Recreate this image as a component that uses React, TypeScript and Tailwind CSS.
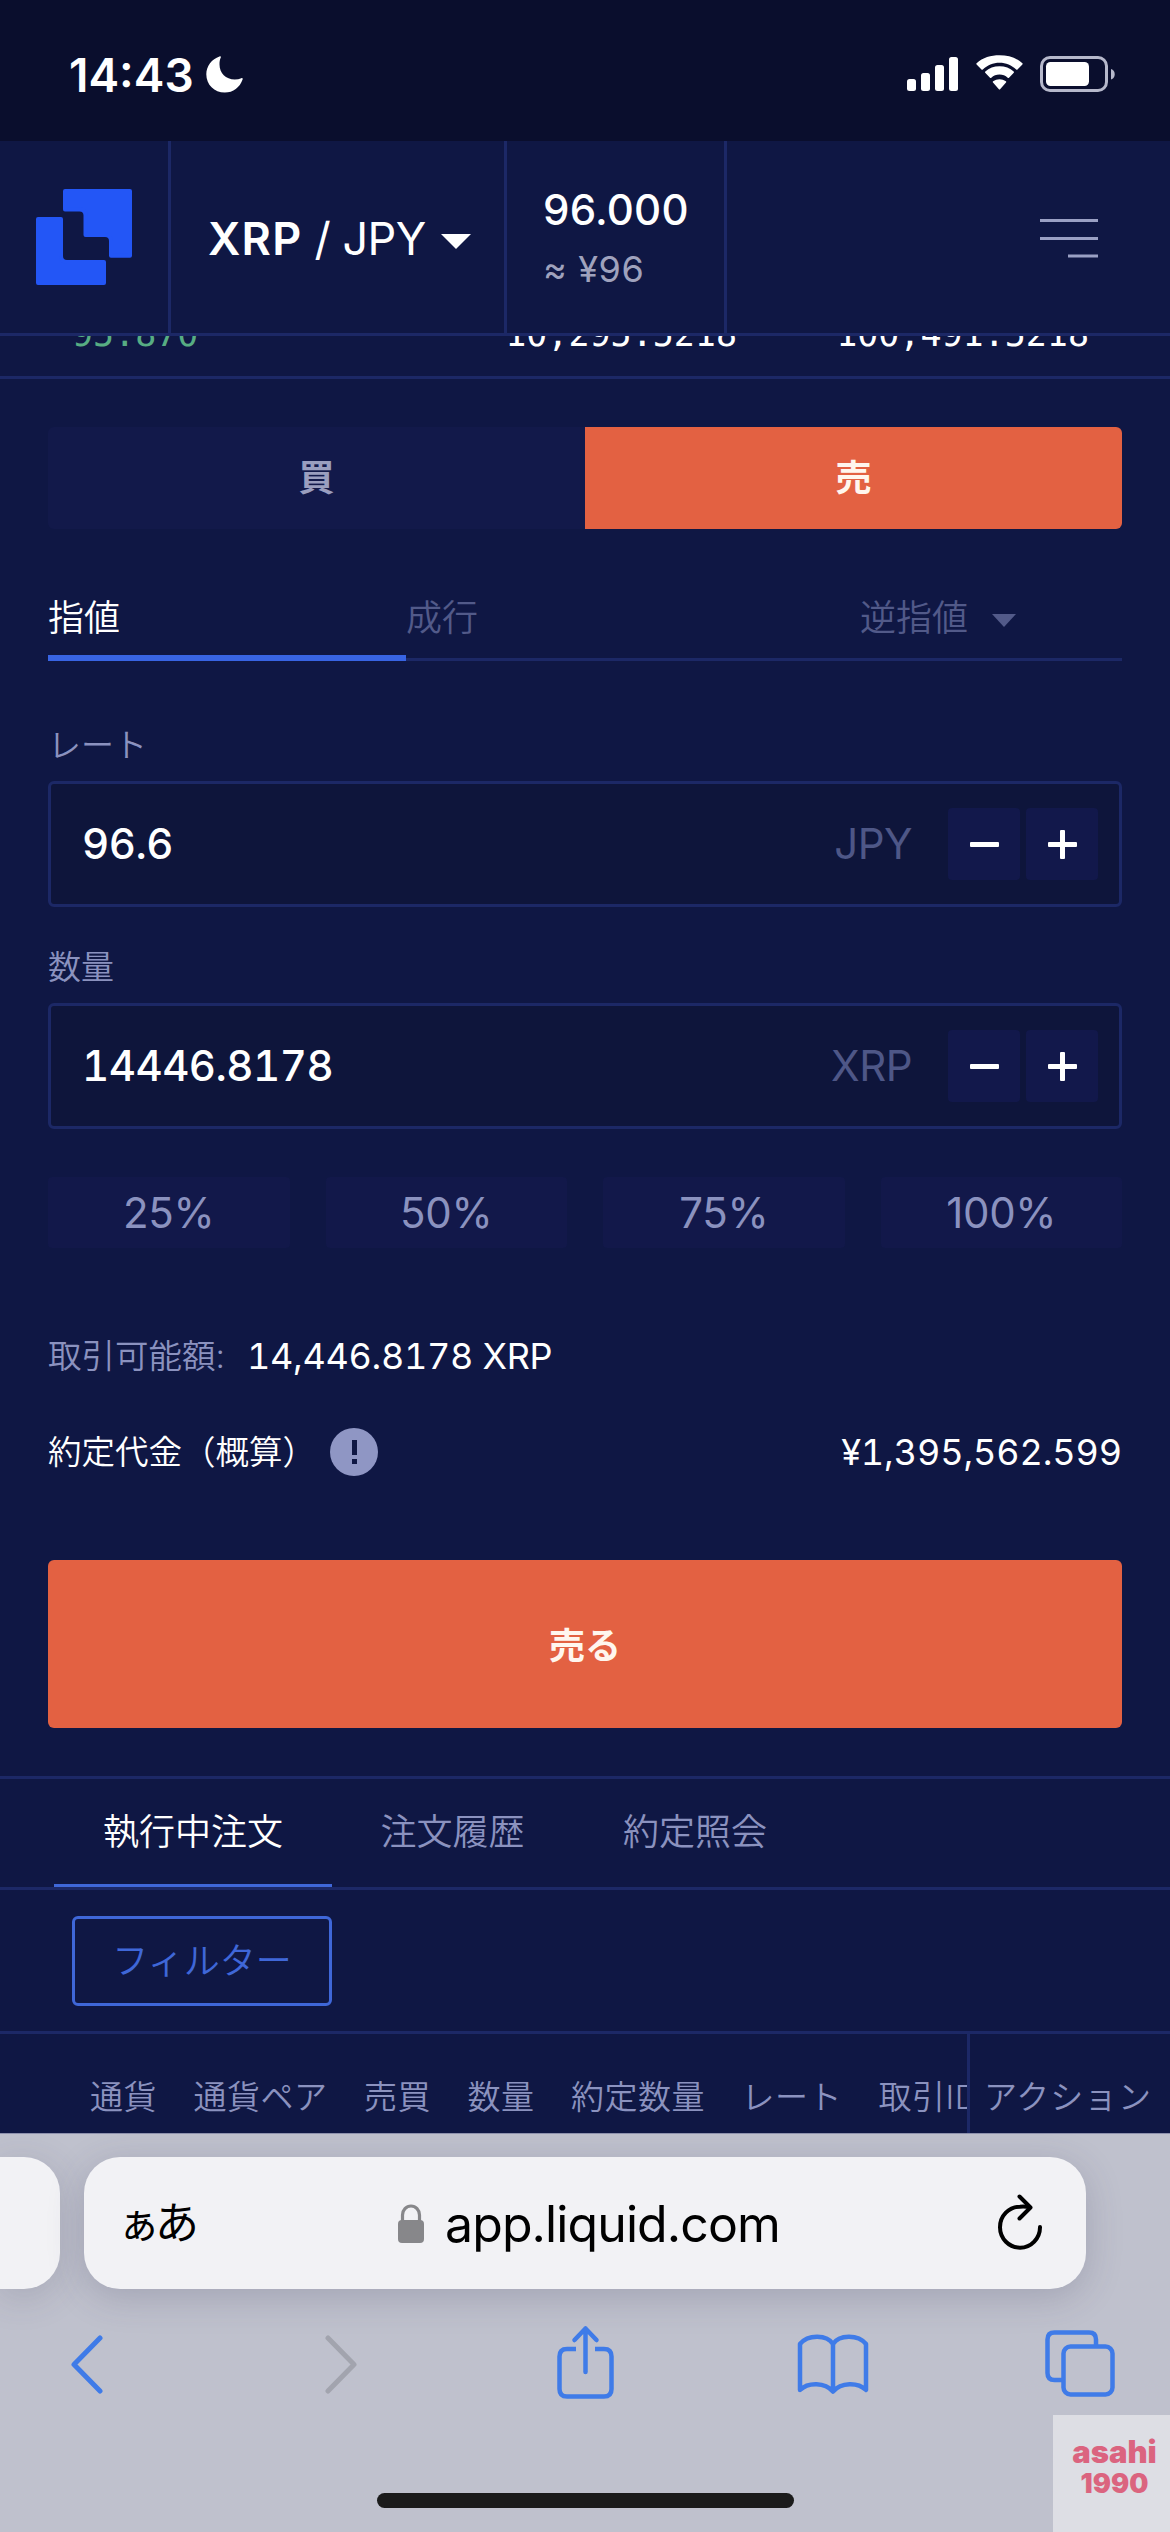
import React from 'react';

function Caret({ className }: { className: string }) {
  return (
    <svg viewBox="0 0 30 15" preserveAspectRatio="none" className={className} fill="currentColor">
      <path d="M0 0h30L15 15z" />
    </svg>
  );
}

function StatusBar() {
  return (
    <div className="flex h-[141px] shrink-0 items-start justify-between bg-[#0a0e2d] pr-[54px] pl-[69px] text-white">
      <div className="flex pt-[47px]">
        <span className="w-[137px] text-[46px] leading-[56px] font-semibold tracking-[0px]">14:43</span>
        <svg className="mt-[9px] h-[37px] w-[37px]" viewBox="0 0 37 37" fill="currentColor">
          <path d="M13.500.4c.9-.4 1.700.3 1.300 1.200-1 2.200-1.300 4.200-1.300 6.600 0 9 6.300 15.200 15.300 15.200 2.400 0 4.600-.4 6.500-1.200.9-.4 1.700.3 1.300 1.200C33.800 31.300 27.200 36.500 18.800 36.500 8.300 36.500.3 28.700.3 18.200.3 10 5.800 3 13.500.4z" />
        </svg>
      </div>
      <div className="flex items-start pt-[55px]">
        <svg className="mt-[2px] h-[34px] w-[51px]" viewBox="0 0 51 34" fill="currentColor">
          <rect x="0" y="22" width="9" height="12" rx="2.500" />
          <rect x="14" y="16" width="9" height="18" rx="2.500" />
          <rect x="28" y="8" width="9" height="26" rx="2.500" />
          <rect x="42" y="0" width="9" height="34" rx="2.500" />
        </svg>
        <svg className="ml-[17px] h-[37px] w-[49px]" viewBox="0 0 49 37" fill="currentColor">
          <path d="M24.500 7.700c6.400 0 12.300 2.500 16.700 6.700.4.400.9.400 1.300 0l4.900-4.900c.4-.4.4-1 0-1.300C41.200 2.600 33.200.3 24.500.3S7.800 2.600 1.600 8.200c-.4.300-.4.900 0 1.300l4.900 4.900c.4.400.9.400 1.300 0 4.400-4.200 10.300-6.700 16.700-6.700z" />
          <path d="M24.500 19.600c3.200 0 6 1.100 8.200 3.100.4.400.9.300 1.300 0l4.800-4.900c.3-.4.3-.9-.1-1.300-3.700-3.400-8.700-5.200-14.200-5.200s-10.500 1.800-14.200 5.200c-.4.400-.4.900-.1 1.300l4.800 4.900c.4.300.9.400 1.300 0 2.200-2 5-3.100 8.200-3.100z" />
          <path d="M31 27.600c.4-.4.300-1-.1-1.300-3.800-2.900-9-2.900-12.800 0-.4.300-.5.900-.1 1.300l5.900 6.600c.3.400.9.400 1.200 0z" />
        </svg>
        <svg className="ml-4 h-[37px] w-[76px]" viewBox="0 0 76 37">
          <rect x="1.500" y="2.500" width="65" height="33" rx="8.500" fill="none" stroke="#b6b8cb" strokeWidth="3" />
          <rect x="6" y="7" width="43" height="24" rx="4.500" fill="#fff" />
          <path d="M71 14c5 1.500 5 9 0 10.500z" fill="#b6b8cb" />
        </svg>
      </div>
    </div>
  );
}

function Header() {
  return (
    <header className="flex h-[195px] shrink-0 border-b-[3px] border-[#1c2866] text-white">
      <div className="flex w-[171px] items-center border-r-[3px] border-[#1c2866] pl-9">
        <svg className="h-24 w-24" viewBox="0 0 96 96" fill="#2356f6" stroke="#2356f6" strokeWidth="4" strokeLinejoin="round">
          <path d="M29 2H94V66.700H75V52Q75 46 69 46H49.500V26.500Q49.500 20.500 43.500 20.500H29Z" />
          <path d="M2 30H25V67Q25 73 31 73H68V94H2Z" />
        </svg>
      </div>
      <div className="flex w-[336px] items-center border-r-[3px] border-[#1c2866] pl-[37px]">
        <span className="mt-[3px] w-[233px] text-[45px] leading-[60px] font-normal tracking-[-0.5px] whitespace-nowrap">
          <b className="font-semibold tracking-[1.200px]">XRP</b> / JPY
        </span>
        <Caret className="mt-2 h-[15px] w-[30px]" />
      </div>
      <div className="flex w-[220px] flex-col border-r-[3px] border-[#1c2866] pt-[42px] pl-9">
        <span className="text-[42px] leading-[54px] font-[450] tracking-[0.2px]">96.000</span>
        <span className="text-[36px] leading-[64px] tracking-[0.6px] text-[#9fa2bd]">≈ ¥96</span>
      </div>
      <div className="flex flex-1 items-start justify-end pt-[78px] pr-[72px]">
        <svg className="h-[39px] w-[58px]" viewBox="0 0 58 39" fill="#9aa0c4">
          <rect y="0" width="58" height="3" />
          <rect y="18" width="58" height="3" />
          <rect x="28" y="35.500" width="30" height="3" />
        </svg>
      </div>
    </header>
  );
}

function OrderBookTail() {
  return (
    <div className="flex h-[43px] shrink-0 items-start overflow-hidden border-b-[3px] border-[#1c2866] font-['DejaVu_Sans_Mono',monospace] text-[35px] leading-[40px] text-white">
      <div className="-mt-[22px] flex w-full">
        <span className="w-[434px] pl-[72px] text-[#57ad83]">95.870</span>
        <span className="w-[303px] text-right">10,295.5218</span>
        <span className="w-[352px] text-right">100,491.5218</span>
      </div>
    </div>
  );
}

function Field({ label, value, unit }: { label: string; value: string; unit: string }) {
  return (
    <div className="flex flex-col">
      <span className="h-[60px] text-[33px] leading-[48px] font-[350] text-[#8b92bf]">{label}</span>
      <div className="flex h-[126px] items-center rounded-md border-[3px] border-[#1c2866] bg-[#0e153b] pr-[21px] pl-[31px]">
        <span className="flex-1 text-[42px] leading-[60px] font-[450] tracking-[-0.5px] tabular-nums text-white">
          {value}
        </span>
        <span className="mr-9 text-[42px] leading-[60px] tracking-[-0.5px] text-[#4e5787]">{unit}</span>
        <div className="flex gap-1.5">
          <Step />
          <Step plus />
        </div>
      </div>
    </div>
  );
}

function Step({ plus }: { plus?: boolean }) {
  return (
    <button className="flex h-[72px] w-[72px] items-center justify-center rounded bg-[#12184b]">
      <svg className="h-[29px] w-[29px]" viewBox="0 0 29 29" fill="#fff">
        <rect x="0" y="12" width="29" height="5" rx="1" />
        {plus && <rect x="12" y="0" width="5" height="29" rx="1" />}
      </svg>
    </button>
  );
}

function OrderForm() {
  return (
    <section className="flex flex-col px-12 pt-12">
      <div className="grid h-[102px] grid-cols-2 text-[36px] font-bold">
        <button className="rounded-l-md bg-[#12194a] text-[#9a9ebf]">買</button>
        <button className="rounded-r-md bg-[#e36142] text-[#fff6ee]">売</button>
      </div>

      <div className="mt-[50px] grid h-[82px] grid-cols-3 text-[36px] leading-[79px] font-[350] text-[#525a89]">
        <span className="h-[82px] border-b-[6px] border-[#3864e3] text-white">指値</span>
        <span className="h-[82px] border-b-[3px] border-[#1c2866]">成行</span>
        <span className="flex h-[82px] items-center justify-center border-b-[3px] border-[#1c2866] pr-[10px]">
          逆指値
          <Caret className="mt-[3px] ml-6 h-[13px] w-6" />
        </span>
      </div>

      <div className="mt-[60px] flex flex-col gap-9">
        <Field label="レート" value="96.6" unit="JPY" />
        <Field label="数量" value="14446.8178" unit="XRP" />
      </div>

      <div className="mt-12 grid h-[71px] grid-cols-4 gap-9 text-[42px] text-[#8b92bf]">
        {['25%', '50%', '75%', '100%'].map((p) => (
          <button key={p} className="rounded bg-[#12184a] tracking-[-0.3px]">
            {p}
          </button>
        ))}
      </div>

      <div className="mt-[78px] flex h-[60px] items-center text-[36px]">
        <span className="w-[199px] text-[33.500px] font-[350] text-[#8b92bf]">取引可能額:</span>
        <span className="tracking-[-0.3px] tabular-nums text-white">14,446.8178 XRP</span>
      </div>
      <div className="mt-9 flex h-[60px] items-center text-white">
        <span className="w-[282px] text-[33.500px] font-[350] whitespace-nowrap">約定代金（概算）</span>
        <span className="flex h-12 w-12 items-center justify-center rounded-full bg-[#8f96c4]">
          <svg className="h-6 w-[5px]" viewBox="0 0 5 24" fill="#0f1744">
            <rect width="5" height="15" />
            <rect y="19" width="5" height="5" />
          </svg>
        </span>
        <span className="ml-auto text-[36px] tracking-[-0.1px] tabular-nums">¥1,395,562.599</span>
      </div>

      <button className="mt-[78px] h-[168px] rounded-md bg-[#e36142] pt-[3px] text-[36px] font-bold text-[#fff6ee]">売る</button>
    </section>
  );
}

function Orders() {
  const columns = ['通貨', '通貨ペア', '売買', '数量', '約定数量', 'レート', '取引ID'];
  return (
    <section className="mt-12 flex min-h-0 flex-1 flex-col border-t-[3px] border-[#1c2866] font-[350]">
      <nav className="flex h-[111px] shrink-0 border-b-[3px] border-[#1c2866] pl-[54px] text-[36px] leading-[107px] text-[#8b92bf]">
        <span className="h-[108px] w-[278px] border-b-[3px] border-[#3f67d8] text-center text-white">執行中注文</span>
        <span className="w-[241px] text-center">注文履歴</span>
        <span className="w-[244px] text-center">約定照会</span>
      </nav>
      <div className="flex h-[144px] shrink-0 items-start border-b-[3px] border-[#1c2866] pt-[26px] pl-[72px]">
        <button className="h-[90px] w-[260px] rounded-md border-[3px] border-[#3f67d8] text-[36px] font-[350] text-[#3f67d8]">
          フィルター
        </button>
      </div>
      <div className="flex min-h-0 flex-1 text-[33px] leading-[127px] tracking-[0.5px] whitespace-nowrap text-[#8b92bf]">
        <div className="flex w-[967px] shrink-0 gap-[36.500px] overflow-hidden pl-[90px]">
          {columns.map((c) => (
            <span key={c} className="shrink-0">
              {c}
            </span>
          ))}
        </div>
        <div className="flex-1 overflow-hidden border-l-[3px] border-[#1c2866] pl-[14px] tracking-[0.9px]">アクション</div>
      </div>
    </section>
  );
}

function BrowserChrome() {
  return (
    <footer className="relative flex h-[399px] shrink-0 flex-col overflow-hidden border-t border-[#8d91ad] bg-[#bfc1cd] pt-[23px]">
      <div className="flex h-[132px] gap-6">
        <div className="w-[60px] rounded-r-[36px] bg-[#f2f2f5] shadow-[0_8px_36px_rgba(60,60,90,0.18)]" />
        <div className="flex w-[1002px] items-center rounded-[36px] bg-[#f2f2f5] pl-[34px] text-black shadow-[0_8px_36px_rgba(60,60,90,0.22)]">
          <span className="flex w-[280px] items-baseline text-[42px] leading-[60px] font-normal">
            <span className="-mr-[5px]">ぁ</span>
            <span className="text-[44px]">あ</span>
          </span>
          <svg className="h-[39px] w-[26px]" viewBox="0 0 26 39">
            <rect x="0" y="16" width="26" height="23" rx="4" fill="#87878a" />
            <path d="M4.500 18v-7a8.500 9 0 0 1 17 0v7" fill="none" stroke="#87878a" strokeWidth="3.200" />
          </svg>
          <span className="mt-[2px] ml-[21px] text-[50px] leading-[60px] tracking-[-0.9px]">app.liquid.com</span>
          <svg className="mr-[43px] -mt-[3px] ml-auto h-[56px] w-[46px]" viewBox="0 0 46 56" fill="none" stroke="#000" strokeWidth="4" strokeLinecap="round" strokeLinejoin="round">
            <path d="M43 33A20 20.500 0 1 1 23 12.700C27 12.300 30 12.600 33 13.500" />
            <path d="M22.500 2.500L33.500 13.500L22.500 24.500" />
          </svg>
        </div>
      </div>
      <div className="mt-9 flex h-[80px] items-start text-[#3f7be8]">
        <svg className="mt-[9px] ml-[70px] h-[60px] w-[34px]" viewBox="0 0 34 60" fill="none" stroke="currentColor" strokeWidth="5" strokeLinecap="round" strokeLinejoin="round">
          <path d="M30 4L4 30.500L30 57" />
        </svg>
        <svg className="mt-[9px] ml-[220px] h-[60px] w-[34px]" viewBox="0 0 34 60" fill="none" stroke="#a2a4ae" strokeWidth="5" strokeLinecap="round" strokeLinejoin="round">
          <path d="M4 4L30 30.500L4 57" />
        </svg>
        <svg className="-mt-[1px] ml-[198px] h-[75px] w-[60px]" viewBox="0 0 60 75" fill="none" stroke="currentColor" strokeWidth="4.500" strokeLinecap="round" strokeLinejoin="round">
          <path strokeLinecap="butt" d="M20 25H11Q3.500 25 3.500 32.500V65Q3.500 72.500 11 72.500H48Q55.500 72.500 55.500 65V32.500Q55.500 25 48 25H39" />
          <path d="M29.500 48V4.500M18.500 16L29.500 4.500L40.500 16" />
        </svg>
        <svg className="mt-[8px] ml-[180px] h-[62px] w-[74px]" viewBox="0 0 74 62" fill="none" stroke="currentColor" strokeWidth="4.500" strokeLinecap="round" strokeLinejoin="round">
          <path d="M37 58V11C31 1.500 12 1 4 11V57C12 49 29 49 37 58.500C45 49 62 49 70 57V11C62 1 43 1.500 37 11" />
        </svg>
        <svg className="mt-[4px] ml-[175px] h-[68px] w-[70px]" viewBox="0 0 70 68" fill="none" stroke="currentColor" strokeWidth="4.500">
          <rect x="18.500" y="17.500" width="49" height="48" rx="7" />
          <path d="M51 17V10.500Q51 3.500 44 3.500H9.500Q2.500 3.500 2.500 10.500V44Q2.500 51 9.500 51H18" />
        </svg>
      </div>
      <div className="mx-auto mt-[88px] h-[15px] w-[417px] rounded-full bg-[#1b1b1b]" />
      <div className="absolute right-0 bottom-0 flex h-[117px] w-[117px] flex-col items-center bg-[#dddee4] pt-[22px] pl-1.5 font-['Inter','Noto_Sans',sans-serif] font-black text-[#db647f]">
        <span className="text-[31px] leading-[30px]">asahi</span>
        <span className="text-[27px] leading-[33px]">1990</span>
      </div>
    </footer>
  );
}

export default function App() {
  return (
    <div
      lang="ja"
      className="flex h-[2532px] w-[1170px] flex-col overflow-hidden bg-[#0f1744] font-['Inter','Noto_Sans_CJK_JP',sans-serif]"
    >
      <StatusBar />
      <Header />
      <OrderBookTail />
      <OrderForm />
      <Orders />
      <BrowserChrome />
    </div>
  );
}
